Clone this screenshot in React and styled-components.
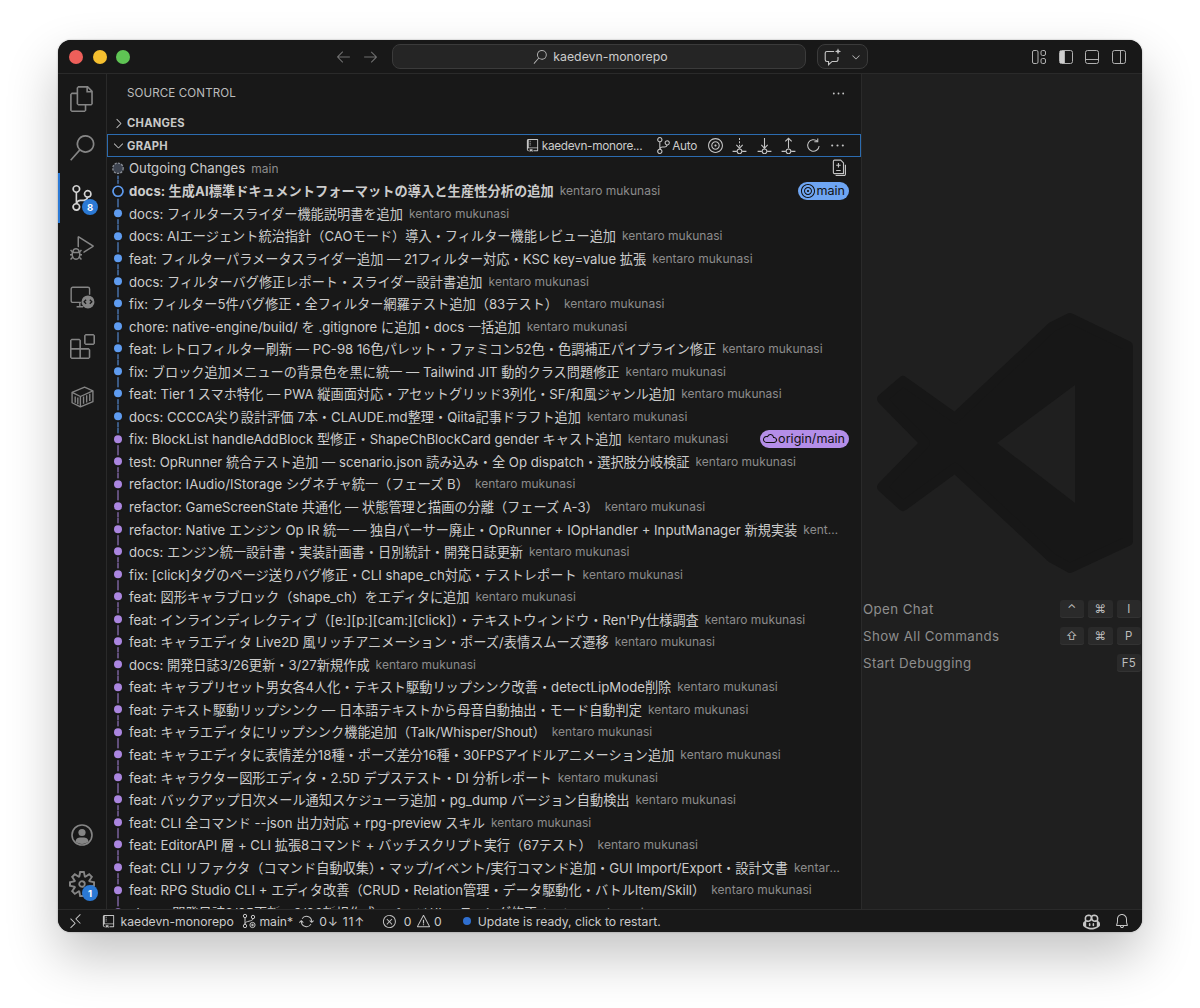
import React from "react";
import styled, { createGlobalStyle } from "styled-components";
import {
  VscFiles, VscSearch, VscSourceControl, VscDebugAlt, VscExtensions,
  VscSettingsGear, VscArrowLeft, VscArrowRight, VscRepo, VscTarget,
  VscEllipsis, VscChevronRight, VscChevronDown,
  VscCloud, VscSync, VscError, VscWarning, VscBell, VscRemote, VscCopilot
} from "react-icons/vsc";

const SANS = `Inter, "Noto Sans CJK JP", "Noto Sans", sans-serif`;

const Global = createGlobalStyle`
  html, body { margin: 0; padding: 0; background: #fff; height: 1008px; overflow: hidden; }
  * { box-sizing: border-box; }
  #root { font-family: ${SANS}; }
`;

const Page = styled.div`
  width: 1200px; height: 1008px; padding: 40px 58px 76px;
`;
const Win = styled.div`
  width: 1084px; height: 892px; border-radius: 13px; overflow: hidden;
  display: flex; flex-direction: column; background: #181818; color: #ccc;
  box-shadow: 0 24px 52px rgba(0,0,0,.24), 0 0 2px rgba(0,0,0,.35);
`;
const TitleBar = styled.div`
  height: 34px; flex: none; display: flex; align-items: center; padding-left: 11px;
  background: #181818; border-bottom: 1px solid #2a2a2a;
`;
const Light = styled.span`
  width: 14px; height: 14px; border-radius: 50%; background: ${p => p.$c}; margin-right: ${p => p.$m}px; flex: none;
`;
const NavIcon = styled.span`
  display: flex; width: 27px; justify-content: center; font-size: 17px; color: #6e6e6e;
`;
const NavGroup = styled.div`display: flex; margin-left: 200px; margin-right: 8px;`;
const SearchBox = styled.div`
  width: 414px; height: 25px; border: 1px solid #3b3b3b; border-radius: 8px; background: #252525;
  display: flex; align-items: center; justify-content: center; gap: 6px; padding-left: 3px;
  font-size: 12.3px; color: #ccc;
  svg { font-size: 14px; color: #b5b5b5; }
`;
const ChatBtn = styled.div`
  width: 51px; height: 25px; margin-left: 11px; border: 1px solid #3b3b3b; border-radius: 8px; background: #202020;
  display: flex; align-items: center; padding-left: 5px; gap: 7px; color: #c5c5c5;
`;
const LayoutGroup = styled.div`
  margin-left: auto; margin-right: 15px; display: flex; gap: 10.7px; color: #b0b0b0;
`;
const Body = styled.div`flex: 1; min-height: 0; display: flex;`;
const Activity = styled.div`
  width: 49px; flex: none; display: flex; flex-direction: column; background: #181818; border-right: 1px solid #2a2a2a;
`;
const ActItem = styled.div`
  position: relative; height: 49.6px; flex: none; display: flex; align-items: center; justify-content: center;
  font-size: ${p => p.$s || 26}px; color: ${p => (p.$active ? "#d4d4d4" : "#858585")};
  ${p => p.$active && "box-shadow: inset 2px 0 0 #2b79d4;"}
`;
const ActSpacer = styled.div`flex: 1;`;
const ActBadge = styled.span`
  position: absolute; left: 24px; top: 26px; width: 16px; height: 16px; border-radius: 50%;
  background: #2b79d4; color: #fff; font-size: 9.5px; font-weight: 700;
  display: flex; align-items: center; justify-content: center;
`;
const Sidebar = styled.div`
  width: 755px; flex: none; display: flex; flex-direction: column; overflow: hidden; background: #181818; border-right: 1px solid #2a2a2a;
`;
const PanelHead = styled.div`
  height: 38px; flex: none; display: flex; align-items: center; justify-content: space-between;
  padding: 0 15px 0 20px; font-size: 11.6px; color: #bcbcbc; letter-spacing: .1px;
  svg { font-size: 15px; color: #c5c5c5; }
`;
const SectionHead = styled.div`
  height: ${p => (p.$focus ? 23 : 22)}px; flex: none; display: flex; align-items: center;
  padding-left: ${p => (p.$focus ? 3 : 4)}px; padding-right: 10px;
  ${p => p.$focus && "border: 1px solid #2c6cb0;"}
  font-size: 11.2px; font-weight: 700; color: #c8c8c8; letter-spacing: .25px;
`;
const Chevron = styled.span`display: flex; width: 16px; font-size: 15px; color: #c5c5c5;`;
const Actions = styled.div`
  margin-left: auto; display: flex; align-items: center; font-weight: 400; font-size: 11.8px; color: #ccc; letter-spacing: -.3px;
`;
const Action = styled.span`
  display: flex; align-items: center; justify-content: center; width: ${p => p.$w || 24.5}px; font-size: 17px; color: #c5c5c5; flex: none;
`;
const ActionLabel = styled.span`white-space: nowrap; margin-right: ${p => p.$m || 0}px;`;
const ActionIcon = styled.span`display: flex; font-size: ${p => p.$s || 15}px; color: #c5c5c5; margin-right: ${p => p.$m ?? 1}px;`;
const List = styled.div`flex: 1; min-height: 0; overflow: hidden;`;
const Row = styled.div`
  height: 22.56px; display: flex; align-items: center; padding-right: 12px; font-size: 13.2px; color: #cccccc; white-space: nowrap;
`;
const GraphCell = styled.svg`width: 22px; height: 22.56px; flex: none; display: block;`;
const Msg = styled.span`
  flex: none; font-weight: ${p => (p.$bold ? 700 : 400)}; letter-spacing: ${p => (p.$bold ? ".08px" : "0")};
`;
const Author = styled.span`
  flex: 0 1 auto; min-width: 0; margin-left: 6px; margin-right: 7px; font-size: 12px; color: #8c8c8c; overflow: hidden; text-overflow: ellipsis;
`;
const RowEnd = styled.span`margin-left: auto; display: flex; align-items: center; flex: none;`;
const Pill = styled.span`
  height: 18px; border-radius: 9px; display: flex; align-items: center; gap: 0; padding: 0 4px 0 2px;
  background: ${p => p.$c}; color: #111; font-size: 12.6px;
  svg { font-size: 16px; }
`;
const Editor = styled.div`
  flex: 1; min-width: 0; background: #1f1f1f; padding-top: 239px; display: flex; flex-direction: column; overflow: hidden;
`;
const Logo = styled.svg`width: 257px; height: 260px; margin-left: 15px; flex: none; display: block;`;
const Shortcuts = styled.div`margin-top: 22px; display: flex; flex-direction: column;`;
const Shortcut = styled.div`
  height: 27px; display: flex; align-items: center; justify-content: space-between; padding: 0 1px;
  font-size: 13.3px; letter-spacing: .4px; color: #8e8e8e;
`;
const Keys = styled.div`display: flex; gap: 4px; letter-spacing: 0;`;
const Key = styled.span`
  width: 24.5px; height: 18px; border-radius: 3px; background: #2a2a2a; box-shadow: inset 0 -1px 0 #333;
  display: flex; align-items: center; justify-content: center; font-size: 11.5px; color: #bdbdbd;
`;
const StatusBar = styled.div`
  height: 23px; flex: none; display: flex; align-items: center; background: #181818; border-top: 1px solid #2a2a2a;
  font-size: 12.2px; color: #cccccc; padding-left: 9px; padding-right: 12px; white-space: nowrap;
`;
const SIcon = styled.span`display: flex; font-size: ${p => p.$s || 15}px; color: #c5c5c5; margin-right: ${p => p.$r ?? 3}px;`;
const SText = styled.span`margin-right: ${p => p.$r || 0}px; letter-spacing: ${p => p.$ls || 0}px;`;
const Dot = styled.span`width: 8px; height: 8px; border-radius: 50%; background: #2f6fd0; margin-left: 21px; margin-right: 7px; flex: none;`;
const SRight = styled.div`margin-left: auto; display: flex; gap: 14px; align-items: center;`;

const BLUE = "#5f9cf0";
const PURPLE = "#ab86e0";
const commits = [
  "docs: フィルタースライダー機能説明書を追加",
  "docs: AIエージェント統治指針（CAOモード）導入・フィルター機能レビュー追加",
  "feat: フィルターパラメータスライダー追加 — 21フィルター対応・KSC key=value 拡張",
  "docs: フィルターバグ修正レポート・スライダー設計書追加",
  "fix: フィルター5件バグ修正・全フィルター網羅テスト追加（83テスト）",
  "chore: native-engine/build/ を .gitignore に追加・docs 一括追加",
  "feat: レトロフィルター刷新 — PC-98 16色パレット・ファミコン52色・色調補正パイプライン修正",
  "fix: ブロック追加メニューの背景色を黒に統一 — Tailwind JIT 動的クラス問題修正",
  "feat: Tier 1 スマホ特化 — PWA 縦画面対応・アセットグリッド3列化・SF/和風ジャンル追加",
  "docs: CCCCA尖り設計評価 7本・CLAUDE.md整理・Qiita記事ドラフト追加",
  "fix: BlockList handleAddBlock 型修正・ShapeChBlockCard gender キャスト追加",
  "test: OpRunner 統合テスト追加 — scenario.json 読み込み・全 Op dispatch・選択肢分岐検証",
  "refactor: IAudio/IStorage シグネチャ統一（フェーズ B）",
  "refactor: GameScreenState 共通化 — 状態管理と描画の分離（フェーズ A-3）",
  "refactor: Native エンジン Op IR 統一 — 独自パーサー廃止・OpRunner + IOpHandler + InputManager 新規実装",
  "docs: エンジン統一設計書・実装計画書・日別統計・開発日誌更新",
  "fix: [click]タグのページ送りバグ修正・CLI shape_ch対応・テストレポート",
  "feat: 図形キャラブロック（shape_ch）をエディタに追加",
  "feat: インラインディレクティブ（[e:][p:][cam:][click]）・テキストウィンドウ・Ren'Py仕様調査",
  "feat: キャラエディタ Live2D 風リッチアニメーション・ポーズ/表情スムーズ遷移",
  "docs: 開発日誌3/26更新・3/27新規作成",
  "feat: キャラプリセット男女各4人化・テキスト駆動リップシンク改善・detectLipMode削除",
  "feat: テキスト駆動リップシンク — 日本語テキストから母音自動抽出・モード自動判定",
  "feat: キャラエディタにリップシンク機能追加（Talk/Whisper/Shout）",
  "feat: キャラエディタに表情差分18種・ポーズ差分16種・30FPSアイドルアニメーション追加",
  "feat: キャラクター図形エディタ・2.5D デプステスト・DI 分析レポート",
  "feat: バックアップ日次メール通知スケジューラ追加・pg_dump バージョン自動検出",
  "feat: CLI 全コマンド --json 出力対応 + rpg-preview スキル",
  "feat: EditorAPI 層 + CLI 拡張8コマンド + バッチスクリプト実行（67テスト）",
  "feat: CLI リファクタ（コマンド自動収集）・マップ/イベント/実行コマンド追加・GUI Import/Export・設計文書",
  "feat: RPG Studio CLI + エディタ改善（CRUD・Relation管理・データ駆動化・バトルItem/Skill）",
  "chore: 開発日誌3/25更新・3/26新規作成・ページ/ルーティング修正",
];

function Graph({ top, bottom, kind, color }) {
  return (
    <GraphCell viewBox="0 0 22 22.5">
      {top && <line x1="11" y1="0" x2="11" y2="11.25" stroke={top} strokeWidth="1" />}
      {bottom && <line x1="11" y1="11.25" x2="11" y2="22.5" stroke={bottom} strokeWidth="1" />}
      {kind === "dot" && (
        <>
          <circle cx="11" cy="11.25" r="6" fill="#181818" />
          <circle cx="11" cy="11.25" r="4" fill={color} />
        </>
      )}
      {kind === "ring" && (
        <>
          <circle cx="11" cy="11.25" r="7.5" fill="#181818" />
          <circle cx="11" cy="11.25" r="5" fill="#181818" stroke={color} strokeWidth="1.7" />
        </>
      )}
      {kind === "out" && (
        <>
          <circle cx="11" cy="11.25" r="7.5" fill="#181818" />
          <circle cx="11" cy="11.25" r="5.2" fill="#3e4450" stroke="#8b8f96" strokeWidth="1.3" strokeDasharray="2.2 1.2" />
        </>
      )}
    </GraphCell>
  );
}

const Svg16 = ({ children, size = 16 }) => (
  <svg width={size} height={size} viewBox="0 0 16 16" fill="none" stroke="currentColor" strokeWidth="1">{children}</svg>
);
const Em16 = ({ children }) => (
  <svg width="1em" height="1em" viewBox="0 0 16 16" fill="none" stroke="currentColor" strokeWidth="1">{children}</svg>
);
const Em24 = ({ children }) => (
  <svg width="1em" height="1em" viewBox="0 0 24 24" fill="none" stroke="currentColor" strokeWidth="1.3" strokeLinejoin="round">{children}</svg>
);
const CustomizeLayout = () => (
  <Svg16><rect x="1.5" y="1.5" width="5.5" height="13" rx="1.5" /><rect x="10" y="1.5" width="4.5" height="5" rx="1.5" /><rect x="10" y="9.5" width="4.5" height="5" rx="1.5" /></Svg16>
);
const LayoutLeft = () => (
  <Svg16><rect x="1.5" y="1.5" width="13" height="13" rx="2" /><path d="M2 2h4v12H2z" fill="#cfcfcf" stroke="none" /><path d="M6.5 2v12" /></Svg16>
);
const LayoutBottom = () => (
  <Svg16><rect x="1.5" y="1.5" width="13" height="13" rx="2" /><path d="M2 10.5h12" /></Svg16>
);
const LayoutRight = () => (
  <Svg16><rect x="1.5" y="1.5" width="13" height="13" rx="2" /><path d="M9.5 2v12" /></Svg16>
);
const ChatSpark = () => (
  <svg width="20" height="20" viewBox="0 0 18 18" fill="none" stroke="currentColor" strokeWidth="1">
    <path d="M10 4H3.5A1.5 1.5 0 0 0 2 5.5v6A1.5 1.5 0 0 0 3.5 13H5v3l3.2-3H12a1.5 1.5 0 0 0 1.5-1.5V9" />
    <path d="M13.5 1.2l.8 2 2 .8-2 .8-.8 2-.8-2-2-.8 2-.8z" fill="currentColor" stroke="none" />
  </svg>
);
const StageAll = () => (
  <svg width="18" height="18" viewBox="0 0 16 16" fill="none" stroke="currentColor" strokeWidth="1">
    <path d="M4 1h5.5L12 3.5V13H4a1 1 0 0 1-1-1V2a1 1 0 0 1 1-1z" />
    <path d="M13.7 5v8.5a1.2 1.2 0 0 1-1.2 1.2H5" />
    <path d="M7.5 3.6v4M5.5 5.6h4M5.5 10.2h4" />
  </svg>
);
const RepoMove = ({ dir }) => (
  <Em16>
    <path d="M1.5 13.5H5.5M10.5 13.5H14.5" />
    <circle cx="8" cy="13.5" r="2.2" />
    {dir === "fetch" && <><path d="M8 1v9" strokeDasharray="1.8 1.3" /><path d="M5 7.5l3 3 3-3" /></>}
    {dir === "pull" && <><path d="M8 1v9.5" /><path d="M5 7.5l3 3 3-3" /></>}
    {dir === "push" && <><path d="M8 1.2v9.5" /><path d="M5 4.2l3-3 3 3" /></>}
  </Em16>
);
const RefreshIcon = () => (
  <Em16>
    <path d="M13.3 8.4A5.4 5.4 0 1 1 11.6 4" />
    <path d="M12 1.3v3.2H8.8" />
  </Em16>
);
const RemoteExplorer = () => (
  <Em24>
    <path d="M11 17H3.5A1.5 1.5 0 0 1 2 15.5v-11A1.5 1.5 0 0 1 3.5 3h14A1.5 1.5 0 0 1 19 4.5V10" />
    <path d="M7 21h6M10 17v4" />
    <circle cx="17.5" cy="16.5" r="6" fill="currentColor" stroke="none" />
    <path d="M15.8 14.5l-1.9 1.9 1.9 1.9M19.2 14.5l1.9 1.9-1.9 1.9" stroke="#181818" strokeWidth="1.2" />
  </Em24>
);
const Container = () => (
  <Em24>
    <path d="M2 8 L14 3 L22 6.5 V17 L10 22 L2 18 Z" />
    <path d="M2 8 L10 12 V22M10 12 L22 6.5" />
    <path d="M13 12v7M16 10.7v7M19 9.4v7M5 12v6M7.5 13v6.5" />
  </Em24>
);
const AccountIcon = () => (
  <Em24>
    <circle cx="12" cy="12" r="10" strokeWidth="1.6" />
    <circle cx="12" cy="9.5" r="3.6" fill="currentColor" stroke="none" />
    <path d="M5.5 18.5C6 14.5 9 14.4 12 14.4s6 .1 6.5 4.1A9.5 9.5 0 0 1 5.5 18.5z" fill="currentColor" stroke="none" />
  </Em24>
);
const BranchDirty = () => (
  <Em16>
    <circle cx="4" cy="3" r="1.7" />
    <circle cx="4" cy="13" r="1.7" />
    <circle cx="12" cy="4" r="1.7" />
    <path d="M4 4.7v6.6M12 5.7c0 3-8 2-8 5" />
    <circle cx="11.5" cy="12" r="2.6" fill="#181818" />
    <circle cx="11.5" cy="12" r=".8" fill="currentColor" />
  </Em16>
);

const rows = commits.map((m, i) => {
  const purple = i >= 10;
  const color = purple ? PURPLE : BLUE;
  return { m, color, top: i === 10 ? BLUE : color, bottom: color };
});

export default function App() {
  return (
    <Page>
      <Global />
      <Win>
        <TitleBar>
          <Light $c="#ee5f5a" $m={10} />
          <Light $c="#f5bf2f" $m={9} />
          <Light $c="#5fc454" $m={0} />
          <NavGroup>
            <NavIcon><VscArrowLeft /></NavIcon>
            <NavIcon><VscArrowRight /></NavIcon>
          </NavGroup>
          <SearchBox><VscSearch />kaedevn-monorepo</SearchBox>
          <ChatBtn><ChatSpark /><VscChevronDown size={12} /></ChatBtn>
          <LayoutGroup>
            <CustomizeLayout /><LayoutLeft /><LayoutBottom /><LayoutRight />
          </LayoutGroup>
        </TitleBar>
        <Body>
          <Activity>
            <ActItem><VscFiles /></ActItem>
            <ActItem><VscSearch /></ActItem>
            <ActItem $active><VscSourceControl /><ActBadge>8</ActBadge></ActItem>
            <ActItem $s={24}><VscDebugAlt /></ActItem>
            <ActItem><RemoteExplorer /></ActItem>
            <ActItem $s={25}><VscExtensions /></ActItem>
            <ActItem $s={25}><Container /></ActItem>
            <ActSpacer />
            <ActItem $s={24}><AccountIcon /></ActItem>
            <ActItem><VscSettingsGear /><ActBadge>1</ActBadge></ActItem>
          </Activity>
          <Sidebar>
            <PanelHead>SOURCE CONTROL<VscEllipsis /></PanelHead>
            <SectionHead><Chevron><VscChevronRight /></Chevron>CHANGES</SectionHead>
            <SectionHead $focus>
              <Chevron><VscChevronDown /></Chevron>GRAPH
              <Actions>
                <ActionIcon $m={1.5}><VscRepo /></ActionIcon>
                <ActionLabel $m={13}>kaedevn-monore...</ActionLabel>
                <ActionIcon $s={17} $m={0}><VscSourceControl /></ActionIcon>
                <ActionLabel $m={6}>Auto</ActionLabel>
                <Action><VscTarget /></Action>
                <Action><RepoMove dir="fetch" /></Action>
                <Action><RepoMove dir="pull" /></Action>
                <Action><RepoMove dir="push" /></Action>
                <Action><RefreshIcon /></Action>
                <Action><VscEllipsis /></Action>
              </Actions>
            </SectionHead>
            <List>
              <Row>
                <Graph kind="out" bottom={BLUE} />
                <Msg>Outgoing Changes</Msg>
                <Author>main</Author>
                <RowEnd><Action $w={20}><StageAll /></Action></RowEnd>
              </Row>
              <Row>
                <Graph kind="ring" color={BLUE} top={BLUE} bottom={BLUE} />
                <Msg $bold>docs: 生成AI標準ドキュメントフォーマットの導入と生産性分析の追加</Msg>
                <Author>kentaro mukunasi</Author>
                <RowEnd><Pill $c="#6ea5f2"><VscTarget />main</Pill></RowEnd>
              </Row>
              {rows.map((r, i) => (
                <Row key={i}>
                  <Graph kind="dot" color={r.color} top={r.top} bottom={r.bottom} />
                  <Msg>{r.m}</Msg>
                  <Author>kentaro mukunasi</Author>
                  {i === 10 && <RowEnd><Pill $c="#b48ee8"><VscCloud />origin/main</Pill></RowEnd>}
                </Row>
              ))}
            </List>
          </Sidebar>
          <Editor>
            <Logo viewBox="877 313 257 260">
              <path
                d="M1070 318 L1128 346 V541 L1070 568 L1052 558 L955 468 L903 506 L882 487 L925 443 L882 399 L903 381 L955 418 L1052 327 Z"
                fill="#171717" stroke="#171717" strokeWidth="10" strokeLinejoin="round"
              />
              <path d="M1075 385 L997 443 L1075 503 Z" fill="#1f1f1f" />
            </Logo>
            <Shortcuts>
              <Shortcut>Open Chat<Keys><Key>⌃</Key><Key>⌘</Key><Key>I</Key></Keys></Shortcut>
              <Shortcut>Show All Commands<Keys><Key>⇧</Key><Key>⌘</Key><Key>P</Key></Keys></Shortcut>
              <Shortcut>Start Debugging<Keys><Key>F5</Key></Keys></Shortcut>
            </Shortcuts>
          </Editor>
        </Body>
        <StatusBar>
          <SIcon $s={17} $r={17}><VscRemote /></SIcon>
          <SIcon $r={4.5}><VscRepo /></SIcon>
          <SText $r={7.5}>kaedevn-monorepo</SText>
          <SIcon $s={16} $r={2}><BranchDirty /></SIcon>
          <SText $r={5.5}>main*</SText>
          <SIcon $r={5.5}><VscSync /></SIcon>
          <SText $r={17} $ls={0.8}>0↓ 11↑</SText>
          <SIcon $r={6.5}><VscError /></SIcon>
          <SText $r={4}>0</SText>
          <SIcon $r={3.5}><VscWarning /></SIcon>
          <SText>0</SText>
          <Dot />
          <SText>Update is ready, click to restart.</SText>
          <SRight>
            <SIcon $s={17} $r={0}><VscCopilot /></SIcon>
            <SIcon $s={16} $r={0}><VscBell /></SIcon>
          </SRight>
        </StatusBar>
      </Win>
    </Page>
  );
}
